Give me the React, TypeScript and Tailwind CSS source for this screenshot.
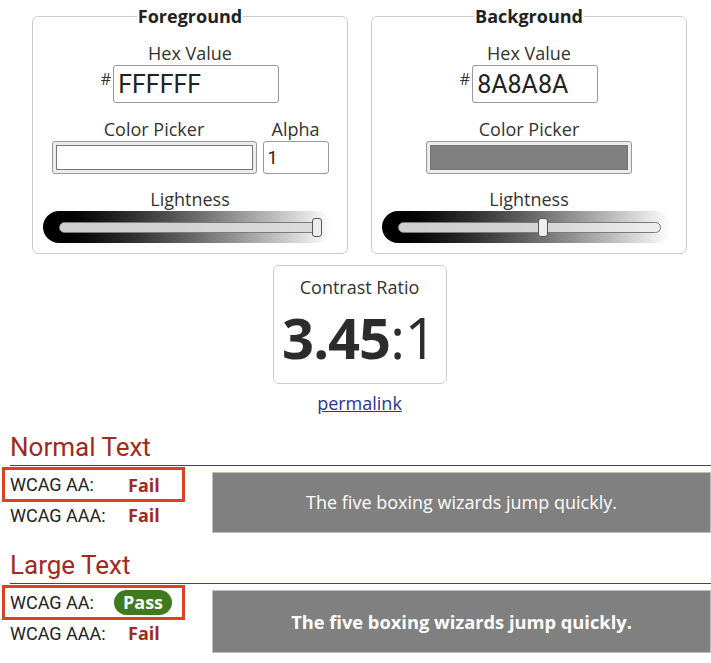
const ROBOTO = "font-['Roboto',sans-serif]";

function Slider({ pos }: { pos: number }) {
  return (
    <div className="flex h-[32px] w-[289px] items-center rounded-full bg-linear-to-r from-black to-white pl-[16px] pr-[10px]">
      <div className="relative h-[11px] flex-1 rounded-full border border-[#7a7a7a] bg-[#eeeeee]/80">
        <div
          className="h-full rounded-full bg-[#d4d4d4]/70"
          style={{ width: `calc((100% - 10px) * ${pos / 100} + 5px)` }}
        />
        <div
          className="absolute top-[-5px] h-[19px] w-[10px] rounded-[3px] border border-[#555] bg-[#eeeeee]"
          style={{ left: `calc((100% - 10px) * ${pos / 100} + 1px)` }}
        />
      </div>
    </div>
  );
}

function Picker({ width, color }: { width: string; color: string }) {
  return (
    <div className={`${width} h-[33px] rounded-[3px] border border-[#999] bg-[#ececec] p-[3px]`}>
      <div className="h-full w-full border border-[#767676]" style={{ background: color }} />
    </div>
  );
}

function ColorPanel({
  title,
  hex,
  hexWidth,
  color,
  pos,
  alpha,
}: {
  title: string;
  hex: string;
  hexWidth: string;
  color: string;
  pos: number;
  alpha?: boolean;
}) {
  return (
    <fieldset className="w-[316px] rounded-[6px] border border-[#ccc] px-[10px] pb-[10px]">
      <legend className="mx-auto px-[1px] text-[18px] font-bold leading-[24px] text-[#222]">{title}</legend>

      <div className="mt-[13px] text-center leading-[24px]">Hex Value</div>
      <div className="flex justify-center">
        <span className="mt-[6px] mr-[2px] text-[16px] leading-none">#</span>
        <div
          className={`${hexWidth} h-[38px] rounded-[3px] border border-[#999] pl-[4px] text-[25px] leading-[37px] text-[#222] ${ROBOTO}`}
        >
          {hex}
        </div>
      </div>

      <div className="mt-[14px] flex justify-center gap-[6px]">
        {alpha ? (
          <>
            <div className="flex flex-col items-center">
              <div className="leading-[24px]">Color Picker</div>
              <Picker width="w-[205px]" color={color} />
            </div>
            <div className="flex flex-col items-center">
              <div className="leading-[24px]">Alpha</div>
              <div
                className={`h-[33px] w-[66px] rounded-[3px] border border-[#999] pl-[4px] text-[18px] leading-[31px] text-[#222] ${ROBOTO}`}
              >
                1
              </div>
            </div>
          </>
        ) : (
          <div className="flex flex-col items-center">
            <div className="leading-[24px]">Color Picker</div>
            <Picker width="w-[206px]" color={color} />
          </div>
        )}
      </div>

      <div className="mt-[13px] text-center leading-[24px]">Lightness</div>
      <Slider pos={pos} />
    </fieldset>
  );
}

function Row({ label, result, boxed }: { label: string; result: 'Pass' | 'Fail'; boxed?: boolean }) {
  return (
    <div
      className={
        boxed
          ? '-ml-[8px] flex h-[35px] w-[183px] items-center border-[3px] border-[#d8441e] pl-[5px]'
          : 'flex h-[26px] items-center'
      }
    >
      <span className={`w-[118px] text-[18px] text-[#222] ${ROBOTO}`}>{label}</span>
      {result === 'Pass' ? (
        <span className="-ml-[14px] rounded-full bg-[#3f7a1e] px-[9px] text-[18px] font-bold leading-[25px] text-white">
          Pass
        </span>
      ) : (
        <span className="text-[18px] font-bold leading-[24px] text-[#9e2a22]">Fail</span>
      )}
    </div>
  );
}

function Section({
  title,
  aa,
  large,
}: {
  title: string;
  aa: 'Pass' | 'Fail';
  large?: boolean;
}) {
  return (
    <div>
      <h2 className={`text-[26px] leading-[30px] text-[#9e2a22] ${ROBOTO}`}>{title}</h2>
      <div className="mt-[3px] flex border-t border-[#8b2a25]">
        <div className="w-[202px] pt-[1px]">
          <Row label="WCAG AA:" result={aa} boxed />
          <Row label="WCAG AAA:" result="Fail" />
        </div>
        <div
          className={`mt-[6px] flex flex-1 items-center justify-center border border-[#bdbdbd] bg-[#808080] text-white ${
            large ? 'h-[63px] text-[18.3px] font-bold' : 'h-[61px] text-[18px]'
          }`}
        >
          The five boxing wizards jump quickly.
        </div>
      </div>
    </div>
  );
}

export default function App() {
  return (
    <div className="min-h-[663px] w-[711px] overflow-hidden bg-white pt-[4px] font-['Open_Sans',sans-serif] text-[18px] text-[#333]">
      <div className="ml-[32px] w-[655px]">
        <div className="flex gap-[23px]">
          <ColorPanel title="Foreground" hex="FFFFFF" hexWidth="w-[166px]" color="#ffffff" pos={100} alpha />
          <ColorPanel title="Background" hex="8A8A8A" hexWidth="w-[126px]" color="#808080" pos={55} />
        </div>

        <div className="mx-auto mt-[11px] flex h-[119px] w-[174px] flex-col items-center rounded-[6px] border border-[#ccc] pt-[9px]">
          <div className="leading-[24px]">Contrast Ratio</div>
          <div className="mt-[5px] text-[56px] leading-[66px] text-[#2c2c2c]">
            <span className="font-bold tracking-[-1px]">3.45</span>
            <span>:1</span>
          </div>
        </div>

        <div className="mt-[7px] text-center leading-[24px]">
          <a href="#" className="text-[18px] text-[#283593] underline">
            permalink
          </a>
        </div>
      </div>

      <div className="mt-[17px] pl-[10px]">
        <Section title="Normal Text" aa="Fail" />
        <div className="mt-[17px]">
          <Section title="Large Text" aa="Pass" large />
        </div>
      </div>
    </div>
  );
}
